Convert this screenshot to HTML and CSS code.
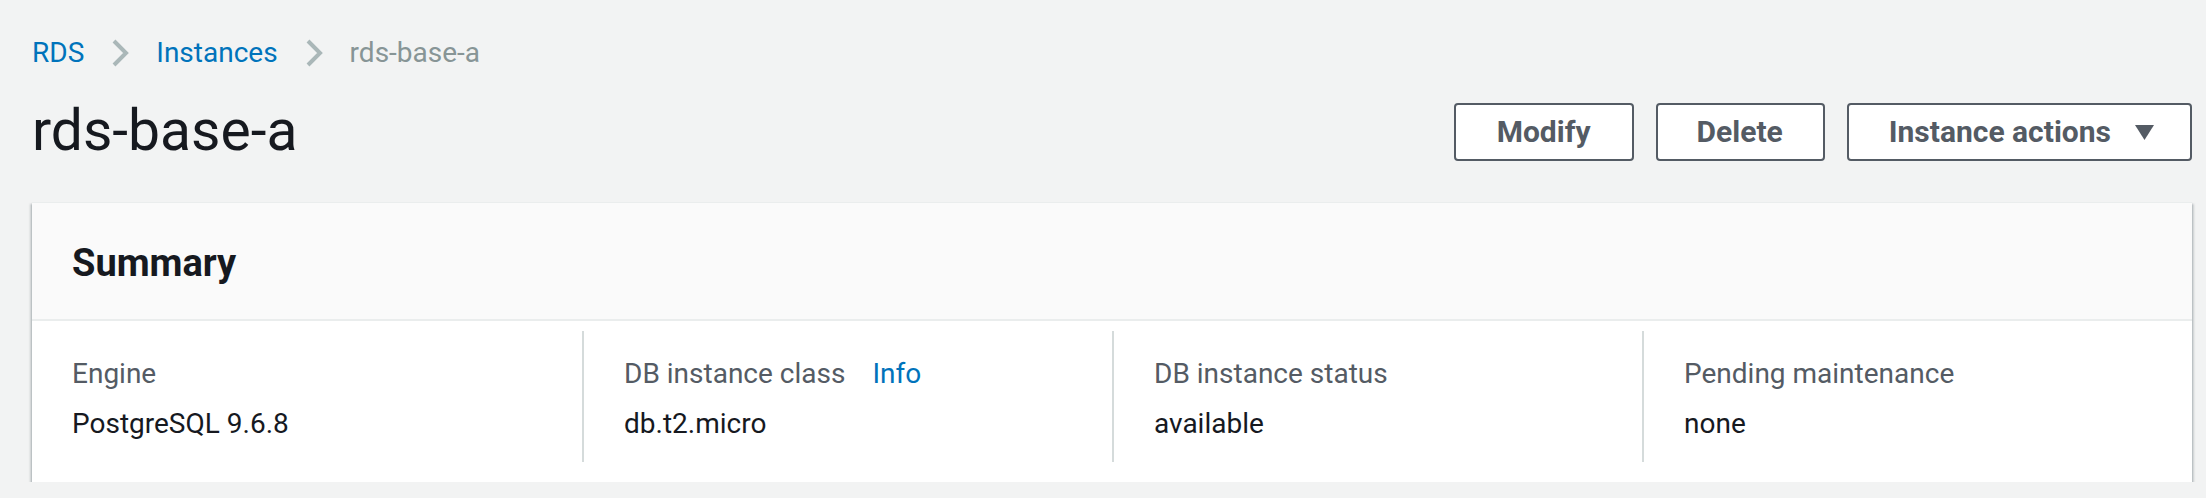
FILE: index.html
```html
<!DOCTYPE html>
<html lang="en">
<head>
<meta charset="utf-8">
<title>rds-base-a</title>
<link rel="stylesheet" href="styles.css">
</head>
<body>
<div class="page">
  <nav class="breadcrumbs">
    <a class="crumb-link" href="#">RDS</a>
    <svg class="chev" width="18" height="30" viewBox="0 0 18 30"><polyline points="3,3 15,15 3,27" fill="none" stroke="#aab7b8" stroke-width="4"/></svg>
    <a class="crumb-link" href="#">Instances</a>
    <svg class="chev" width="18" height="30" viewBox="0 0 18 30"><polyline points="3,3 15,15 3,27" fill="none" stroke="#aab7b8" stroke-width="4"/></svg>
    <span class="crumb-current">rds-base-a</span>
  </nav>
  <div class="head">
    <h1 class="title">rds-base-a</h1>
    <div class="actions">
      <button class="btn">Modify</button>
      <button class="btn btn-delete">Delete</button>
      <button class="btn btn-drop">Instance actions
        <svg class="caret" width="19" height="15" viewBox="0 0 19 15"><polygon points="0,0 19,0 9.5,15" fill="#545b64"/></svg>
      </button>
    </div>
  </div>
  <section class="card">
    <div class="card-header"><h2 class="card-title">Summary</h2></div>
    <div class="card-body">
      <div class="col col-first">
        <div class="label">Engine</div>
        <div class="value">PostgreSQL 9.6.8</div>
      </div>
      <div class="col">
        <div class="label">DB instance class <a class="info" href="#">Info</a></div>
        <div class="value">db.t2.micro</div>
      </div>
      <div class="col">
        <div class="label">DB instance status</div>
        <div class="value">available</div>
      </div>
      <div class="col">
        <div class="label">Pending maintenance</div>
        <div class="value">none</div>
      </div>
    </div>
  </section>
</div>
</body>
</html>
```
FILE: styles.css
```css
* { box-sizing: border-box; }
html, body {
  margin: 0;
  background: #f2f3f3;
  font-family: Roboto, "Liberation Sans", sans-serif;
  color: #16191f;
}
.page {
  padding: 33px 14px 0 32px;
}
.breadcrumbs {
  display: flex;
  align-items: center;
  gap: 27px;
  font-size: 28px;
  line-height: 40px;
}
.crumb-link {
  color: #0073bb;
  text-decoration: none;
}
.crumb-current {
  color: #879596;
}
.chev { display: block; }
.head {
  display: flex;
  align-items: center;
  justify-content: space-between;
  margin-top: 26px;
}
.title {
  margin: 0;
  font-size: 57px;
  line-height: 64px;
  font-weight: 400;
  color: #16191f;
}
.actions {
  display: flex;
  gap: 22px;
  margin-top: 2px;
}
.btn {
  font-family: Roboto, "Liberation Sans", sans-serif;
  font-weight: 700;
  font-size: 30px;
  line-height: 40px;
  color: #545b64;
  background: #fff;
  border: 2px solid #545b64;
  border-radius: 4px;
  padding: 7px 41px;
  display: flex;
  align-items: center;
}
.btn-delete {
  padding: 7px 40px 7px 39px;
}
.btn-drop {
  padding-left: 40px;
  padding-right: 36px;
  gap: 24px;
}
.caret { display: block; }
.card {
  margin-top: 39px;
  background: #fff;
  border-top: 1px solid #eaeded;
  box-shadow: 0 2px 2px 0 rgba(0, 28, 36, 0.3), 2px 2px 2px 0 rgba(0, 28, 36, 0.15), -2px 2px 2px 0 rgba(0, 28, 36, 0.15);
}
.card-header {
  background: #fafafa;
  border-bottom: 2px solid #eaeded;
  padding: 35px 40px 31px;
}
.card-title {
  margin: 0;
  font-size: 38px;
  line-height: 50px;
  font-weight: 700;
  color: #16191f;
}
.card-body {
  display: grid;
  grid-template-columns: repeat(4, 1fr);
  padding: 10px 20px 20px;
}
.col {
  border-left: 2px solid #d5dbdb;
  padding: 23px 20px 18px 40px;
}
.col-first {
  border-left: none;
  padding-left: 20px;
}
.label {
  font-size: 28px;
  line-height: 40px;
  color: #545b64;
  display: flex;
  gap: 27px;
}
.info {
  color: #0073bb;
  text-decoration: none;
}
.value {
  margin-top: 10px;
  font-size: 28px;
  line-height: 40px;
  color: #16191f;
}
```
